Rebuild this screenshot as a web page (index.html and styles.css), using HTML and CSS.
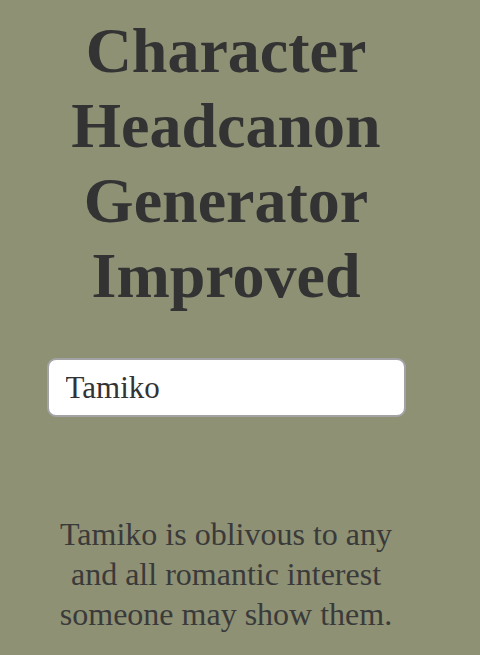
FILE: index.html
```html
<!DOCTYPE html>
<html>
<head>
<meta charset="utf-8">
<link rel="stylesheet" href="styles.css">
</head>
<body>
<div class="page">
  <h1 class="title">Character Headcanon Generator Improved</h1>
  <input class="name-input" type="text" value="Tamiko">
  <p class="result">Tamiko is oblivous to any and all romantic interest someone may show them.</p>
</div>
</body>
</html>
```
FILE: styles.css
```css
html, body {
  margin: 0;
  padding: 0;
  background: #8e9174;
  height: 100%;
}
.page {
  width: 452px;
  display: flex;
  flex-direction: column;
  align-items: center;
  text-align: center;
  font-family: "Liberation Serif", "Times New Roman", serif;
  color: #333333;
}
.title {
  margin: 13px 0 0 0;
  font-size: 64px;
  line-height: 75px;
  font-weight: bold;
}
.name-input {
  box-sizing: border-box;
  margin-top: 45px;
  width: 359px;
  height: 59px;
  padding: 0 17px;
  border: 2px solid #a3a3a6;
  border-radius: 9px;
  background: #ffffff;
  font-family: "Liberation Serif", "Times New Roman", serif;
  font-size: 31px;
  color: #333333;
  outline: none;
}
.result {
  margin: 97px 0 0 0;
  width: 359px;
  font-size: 32px;
  line-height: 40px;
  color: #3a3a3a;
}
```
